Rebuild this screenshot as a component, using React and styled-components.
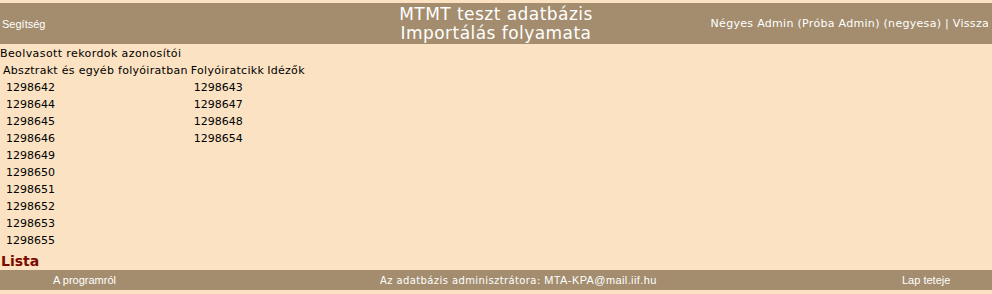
import styled, { createGlobalStyle } from "styled-components";

const GlobalStyle = createGlobalStyle`
  body {
    margin: 0;
    background: #fae2c2;
    color: #000;
    font-family: "DejaVu Sans", Verdana, sans-serif;
    font-size: 11px;
  }
`;

const abstracts = [
  "1298642", "1298644", "1298645", "1298646", "1298649",
  "1298650", "1298651", "1298652", "1298653", "1298655",
];
const articles = ["1298643", "1298647", "1298648", "1298654"];

const App = () => {
  return (
    <Page>
      <GlobalStyle />
      <Header>
        <HelpLink>Segítség</HelpLink>
        <Title>
          MTMT teszt adatbázis
          <br />
          Importálás folyamata
        </Title>
        <UserInfo>Négyes Admin (Próba Admin) (negyesa) | Vissza</UserInfo>
      </Header>

      <Caption>Beolvasott rekordok azonosítói</Caption>
      <IdTable>
        <HeadCell>Absztrakt és egyéb folyóiratban</HeadCell>
        <HeadCell>Folyóiratcikk</HeadCell>
        <HeadCell>Idézők</HeadCell>
        <IdList>
          {abstracts.map((id) => (
            <IdRow key={id}>{id}</IdRow>
          ))}
        </IdList>
        <IdList>
          {articles.map((id) => (
            <IdRow key={id}>{id}</IdRow>
          ))}
        </IdList>
        <IdList />
      </IdTable>

      <ListTitle>Lista</ListTitle>

      <Footer>
        <FooterLink>A programról</FooterLink>
        <AdminNote>
          Az adatbázis adminisztrátora: <FooterLink>MTA-KPA@mail.iif.hu</FooterLink>
        </AdminNote>
        <FooterLink>Lap teteje</FooterLink>
      </Footer>
    </Page>
  );
};

export default App;

const Page = styled.div`
  padding-top: 3px;
  width: 992px;
`;

const Header = styled.div`
  display: grid;
  grid-template-columns: 1fr auto 1fr;
  align-items: center;
  height: 41px;
  background: #a38d6e;
  color: #fff;
`;

const HelpLink = styled.span`
  font-family: "Liberation Sans", Arial, sans-serif;
  font-size: 11px;
  padding-left: 2px;
`;

const Title = styled.div`
  font-size: 17px;
  line-height: 19px;
  letter-spacing: 0.45px;
  text-align: center;
  padding-top: 1px;
`;

const UserInfo = styled.span`
  justify-self: end;
  padding-right: 3px;
  font-size: 11px;
  letter-spacing: 0.3px;
`;

const Caption = styled.div`
  height: 17px;
  line-height: 17px;
  padding-top: 1px;
  letter-spacing: 0.4px;
`;

const IdTable = styled.div`
  display: grid;
  grid-template-columns: auto auto 1fr;
  column-gap: 3px;
  padding-left: 3px;
`;

const HeadCell = styled.div`
  height: 17px;
  line-height: 17px;
  letter-spacing: 0.3px;
  white-space: nowrap;
`;

const IdList = styled.div`
  display: flex;
  flex-direction: column;
`;

const IdRow = styled.div`
  height: 17px;
  line-height: 17px;
  padding-left: 3px;
`;

const ListTitle = styled.div`
  color: #7a0a00;
  font-weight: bold;
  font-size: 14px;
  line-height: 17px;
  padding-left: 1px;
  margin-top: 4px;
`;

const Footer = styled.div`
  display: grid;
  grid-template-columns: 380px 522px 1fr;
  align-items: center;
  height: 20px;
  background: #a38d6e;
  color: #fff;

  & > :first-child {
    padding-left: 53px;
  }
`;

const FooterLink = styled.span`
  font-family: "Liberation Sans", Arial, sans-serif;
  font-size: 11px;
  color: #fff;
`;

const AdminNote = styled.span`
  font-size: 10px;
  letter-spacing: 0.4px;
`;
